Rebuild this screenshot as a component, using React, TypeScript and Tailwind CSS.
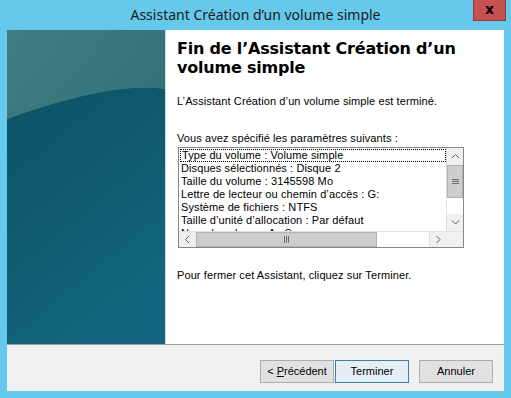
import React from "react";

const rows = [
  "Type du volume : Volume simple",
  "Disques sélectionnés : Disque 2",
  "Taille du volume : 3145598 Mo",
  "Lettre de lecteur ou chemin d’accès : G:",
  "Système de fichiers : NTFS",
  "Taille d’unité d’allocation : Par défaut",
  "Nom du volume : Ac Sa",
];

function Chevron({ dir }: { dir: "up" | "down" | "left" | "right" }) {
  const d =
    dir === "up"
      ? "M1 5 L4.5 1.5 L8 5"
      : dir === "down"
      ? "M1 1.5 L4.5 5 L8 1.5"
      : dir === "left"
      ? "M5 1 L1.5 4.5 L5 8"
      : "M1.5 1 L5 4.5 L1.5 8";
  const w = dir === "up" || dir === "down" ? 9 : 7;
  const h = dir === "up" || dir === "down" ? 7 : 9;
  return (
    <svg width={w} height={h} viewBox={`0 0 ${w} ${h}`}>
      <path d={d} fill="none" stroke="#606060" strokeWidth="1" />
    </svg>
  );
}

function LeftArt() {
  return (
    <svg width="158" height="314" viewBox="0 0 158 314" className="block shrink-0">
      <defs>
        <linearGradient id="top" x1="0" y1="0" x2="0.6" y2="1">
          <stop offset="0" stopColor="#3f7d81" />
          <stop offset="1" stopColor="#2c6a75" />
        </linearGradient>
        <linearGradient id="bot" x1="0" y1="0" x2="0.5" y2="1">
          <stop offset="0" stopColor="#0c5466" />
          <stop offset="0.5" stopColor="#0f5a6e" />
          <stop offset="1" stopColor="#13667e" />
        </linearGradient>
      </defs>
      <rect x="0" y="0" width="158" height="314" fill="url(#top)" />
      <path d="M0 89 Q105 51 158 59 L158 314 L0 314 Z" fill="url(#bot)" />
      <path d="M0 88.5 Q105 50.5 158 58.5" fill="none" stroke="#3a7a82" strokeWidth="1" opacity="0.6" />
    </svg>
  );
}

function Button({
  children,
  primary,
}: {
  children: React.ReactNode;
  primary?: boolean;
}) {
  return (
    <div
      className={
        "w-[74px] h-[23px] flex items-center justify-center text-[11px] text-[#000] border " +
        (primary ? "bg-[#e5eef6] border-[#3c7fb1]" : "bg-[#e1e1e1] border-[#adadad]")
      }
    >
      {children}
    </div>
  );
}

export default function App() {
  return (
    <div className="w-[511px] h-[398px] bg-[#66c9ec] flex flex-col font-['Liberation_Sans',Arial,sans-serif] overflow-hidden">
      <div className="h-[30px] relative flex items-center justify-center shrink-0">
        <span className="text-[14px] text-[#1b1b1b] font-['Noto_Sans',sans-serif] leading-none pb-[1px]">
          Assistant Création d’un volume simple
        </span>
        <div className="absolute right-[5px] top-0 w-[33px] h-[21px] bg-[#c75050] border border-t-0 border-[#8f3b3b] flex items-center justify-center">
          <span className="text-[14px] font-bold leading-none text-black font-['DejaVu_Sans',sans-serif] -mt-[2px]">x</span>
        </div>
      </div>
      <div className="mx-[7px] flex flex-col flex-1 mb-[7px]">
        <div className="flex h-[314px] bg-white">
          <LeftArt />
          <div className="flex-1 border-l border-[#d5dadb] pl-[11px] pt-[9px] flex flex-col">
            <div className="font-['DejaVu_Sans',Verdana,sans-serif] font-bold text-[16px] leading-[19px] text-black tracking-[-0.2px]">
              Fin de l’Assistant Création d’un
              <br />
              volume simple
            </div>
            <div className="mt-[18px] text-[11px] leading-[13px] text-black tracking-[0.1px]">
              L’Assistant Création d’un volume simple est terminé.
            </div>
            <div className="mt-[24px] text-[11px] leading-[13px] text-black tracking-[0.1px]">
              Vous avez spécifié les paramètres suivants :
            </div>
            <div className="mt-[2px] ml-[1px] w-[286px] h-[101px] border border-[#828790] flex flex-col bg-white">
              <div className="flex h-[83px]">
                <div className="flex-1 overflow-hidden pt-[1px]">
                  {rows.map((r, i) => (
                    <div
                      key={i}
                      className={
                        "h-[13px] leading-[13px] text-[11px] text-black pl-[2px] whitespace-nowrap tracking-[0.1px] " +
                        (i === 0 ? "outline outline-1 outline-dotted outline-[#000] -outline-offset-1 ml-[1px] pl-[1px]" : "")
                      }
                    >
                      {r}
                    </div>
                  ))}
                </div>
                <div className="w-[17px] flex flex-col bg-[#f0f0f0] border-l border-[#e0e0e0]">
                  <div className="h-[17px] flex items-center justify-center bg-[#f0f0f0]">
                    <Chevron dir="up" />
                  </div>
                  <div className="h-[33px] bg-[#cdcdcd] border border-[#b2b2b2] flex items-center justify-center">
                    <div className="flex flex-col gap-[1px]">
                      <div className="w-[7px] h-[1px] bg-[#6d6d6d]" />
                      <div className="w-[7px] h-[1px] bg-[#6d6d6d]" />
                      <div className="w-[7px] h-[1px] bg-[#6d6d6d]" />
                    </div>
                  </div>
                  <div className="flex-1 bg-white" />
                  <div className="h-[17px] flex items-center justify-center bg-[#f0f0f0]">
                    <Chevron dir="down" />
                  </div>
                </div>
              </div>
              <div className="flex h-[16px] border-t border-[#e0e0e0]">
                <div className="flex-1 flex bg-white">
                  <div className="w-[17px] flex items-center justify-center bg-[#f0f0f0]">
                    <Chevron dir="left" />
                  </div>
                  <div className="w-[181px] bg-[#cdcdcd] border border-[#b2b2b2] flex items-center justify-center">
                    <div className="flex gap-[1px]">
                      <div className="w-[1px] h-[7px] bg-[#6d6d6d]" />
                      <div className="w-[1px] h-[7px] bg-[#6d6d6d]" />
                      <div className="w-[1px] h-[7px] bg-[#6d6d6d]" />
                    </div>
                  </div>
                  <div className="flex-1" />
                  <div className="w-[17px] flex items-center justify-center bg-[#f0f0f0] border-l border-[#e0e0e0]">
                    <Chevron dir="right" />
                  </div>
                </div>
                <div className="w-[17px] bg-[#f0f0f0]" />
              </div>
            </div>
            <div className="mt-[21px] text-[11px] leading-[13px] text-black tracking-[0.1px]">
              Pour fermer cet Assistant, cliquez sur Terminer.
            </div>
          </div>
        </div>
        <div className="flex-1 bg-[#f0f0f0] border-t border-[#a0a0a0] flex items-start justify-end pt-[15px] pr-[11px]">
          <Button>
            &lt; <span className="underline ml-[3px]">P</span>récédent
          </Button>
          <div className="w-[1px]" />
          <Button primary>Terminer</Button>
          <div className="w-[10px]" />
          <Button>Annuler</Button>
        </div>
      </div>
    </div>
  );
}
